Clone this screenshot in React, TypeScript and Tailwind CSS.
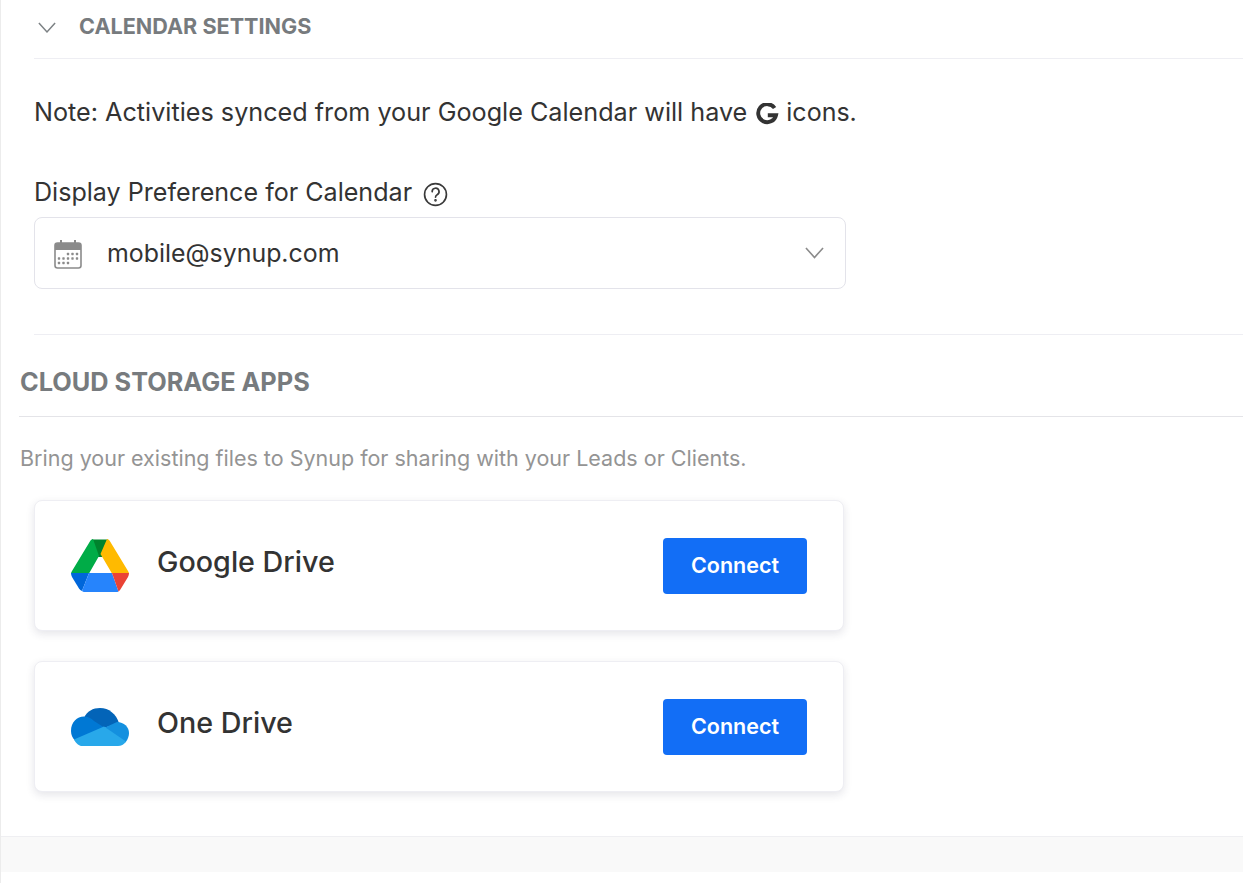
import React from 'react';

const GoogleDriveIcon = () => (
  <svg width="58" height="53" viewBox="0 0 58 53" className="shrink-0">
    <path d="M21 0.5 L37 0.5 L31 18 L27 18 L21 0.5 Z" fill="#00832d" />
    <path d="M19.5 1.5 Q20.5 0 22 0 L28 17 L18 34.5 L0 34.5 Q0 33.5 1 32 L19.5 1.5 Z" fill="#00ac47" />
    <path d="M36 0 Q37.5 0 38.5 1.5 L57 32 Q58 33.5 58 34.5 L41 34.5 L29.5 15 L36 0 Z" fill="#ffba00" />
    <path d="M0 34 L18 34 L11 52 Q9 51 8 49.5 L1 38 Q0 36 0 34 Z" fill="#0066da" />
    <path d="M18 34 L41 34 L47.5 52.5 Q46.5 53 45 53 L13 53 Q12 53 11 52 L18 34 Z" fill="#2684fc" />
    <path d="M41 34 L58 34 Q58 36 57 38 L50 49.5 Q49 51.5 47.5 52.5 L41 34 Z" fill="#ea4335" />
  </svg>
);

const OneDriveIcon = () => (
  <svg width="58" height="38" viewBox="0 0 58 38" className="shrink-0">
    <path d="M13 10 C16 3 22 0 29 0 C38 0 45 6 48 15 L33 20 L20 14 Z" fill="#0364b8" />
    <path d="M13 8.5 C6 8.5 0 14 0 23 C0 27 1.5 30 4 32.5 L34 20 L23 13 C20 10 17 8.5 13 8.5 Z" fill="#0078d4" />
    <path d="M46 14 C53 14 58 19 58 25 C58 28 57 31 54.5 34.5 L33 20 Z" fill="#1490df" />
    <path d="M3 31.5 L33 18.5 L55 33.5 C53 36.5 50 38 47 38 L11 38 C8 38 5 35.5 3 31.5 Z" fill="#28a8ea" />
  </svg>
);

const GoogleMark = () => (
  <svg width="23" height="23" viewBox="0 0 23 23" fill="none" className="shrink-0">
    <path d="M18.6 5 A9 9 0 1 0 20 12.2 L11.8 12.2" stroke="#333333" strokeWidth="3.9" />
  </svg>
);

const CalendarIcon = () => (
  <svg width="30" height="30" viewBox="0 0 30 30" className="shrink-0">
    <rect x="2" y="4" width="26" height="25" rx="2.5" fill="#fff" stroke="#8b8b8b" strokeWidth="1.6" />
    <path d="M2 7 Q2 4 5 4 L25 4 Q28 4 28 7 L28 11 L2 11 Z" fill="#8b8b8b" />
    <rect x="7" y="1" width="2" height="5" fill="#8b8b8b" />
    <rect x="21" y="1" width="2" height="5" fill="#8b8b8b" />
    <g fill="#8b8b8b">
      {[[15, 15], [19.5, 15], [24, 15], [6, 19.5], [10.5, 19.5], [15, 19.5], [19.5, 19.5], [24, 19.5], [6, 24], [10.5, 24], [15, 24]].map(([x, y]) => (
        <rect key={`${x}-${y}`} x={x - 1.2} y={y - 1.2} width="2.4" height="2.4" rx="0.6" />
      ))}
    </g>
  </svg>
);

const HelpIcon = () => (
  <svg width="25" height="25" viewBox="0 0 24 24" fill="none" stroke="#3a3a3a" strokeWidth="1.6" strokeLinecap="round" className="shrink-0">
    <circle cx="12" cy="12" r="10.5" />
    <path d="M8.8 9.3 A3.3 3.3 0 1 1 13.6 12.2 C12.6 12.8 12 13.3 12 14.6" />
    <circle cx="12" cy="17.6" r="0.5" fill="#3a3a3a" />
  </svg>
);

const Chevron = ({ color, width }: { color: string; width: number }) => (
  <svg width={width} height={width * 0.6} viewBox="0 0 20 12" fill="none" stroke={color} strokeWidth="1.7" className="shrink-0">
    <path d="M1 1 L10 11 L19 1" />
  </svg>
);

const AppCard = ({ name, icon }: { name: string; icon: React.ReactNode }) => (
  <div className="h-[131px] w-[810px] rounded-[8px] border border-[#eeeef3] bg-white shadow-[0_3px_8px_rgba(40,40,70,0.12)] pl-[36px] pr-[36px] flex items-center">
    <div className="w-[58px] flex justify-center">{icon}</div>
    <span className="ml-[28px] mb-[8px] text-[28.7px] font-medium text-[#333333]">{name}</span>
    <button className="ml-auto h-[56px] w-[144px] pb-[2px] rounded-[4px] bg-[#126ef6] text-white text-[21.5px] font-semibold mt-[1px]">Connect</button>
  </div>
);

export default function App() {
  return (
    <div className="w-[1243px] h-[883px] overflow-hidden bg-white border-l border-[#ececec] font-['Inter',sans-serif] flex flex-col">
      <div className="pl-[33px]">
        <div className="h-[59px] border-b border-[#eeeef3] flex items-start pt-[10px]">
          <span className="ml-[4px] mt-[12px]"><Chevron color="#7d8285" width={18} /></span>
          <span className="ml-[23px] text-[21.6px] leading-[32px] font-bold text-[#777b7e]">CALENDAR SETTINGS</span>
        </div>
        <div className="mt-[36px] flex items-center h-[36px] text-[25.2px] text-[#333333]">
          Note: Activities synced from your Google Calendar will have
          <span className="ml-[9px] mr-[7px] mt-[3px]"><GoogleMark /></span>
          <span className="text-[25px]">icons.</span>
        </div>
        <div className="mt-[44px] flex items-center h-[36px] text-[25.1px] text-[#333333]">
          Display Preference for Calendar
          <span className="ml-[11px] mt-[2px]"><HelpIcon /></span>
        </div>
        <div className="mt-[6px] w-[812px] h-[72px] rounded-[8px] border border-[#e3e3ea] flex items-center pl-[18px] pr-[21px]">
          <span className="mt-[2px]"><CalendarIcon /></span>
          <span className="ml-[24px] mt-[2px] text-[24.9px] text-[#333333]">mobile@synup.com</span>
          <span className="ml-auto"><Chevron color="#8b8b8b" width={19} /></span>
        </div>
        <div className="mt-[45px] border-b border-[#eeeef3]" />
      </div>
      <div className="pl-[18px]">
        <div className="h-[82px] border-b border-[#e4e4e8] flex items-start pt-[30px]">
          <span className="ml-[1px] text-[25.3px] leading-[34px] font-bold text-[#777b7e]">CLOUD STORAGE APPS</span>
        </div>
        <p className="ml-[1px] mt-[25px] text-[21.5px] leading-[32px] text-[#949494]">Bring your existing files to Synup for sharing with your Leads or Clients.</p>
        <div className="ml-[15px] mt-[26px] flex flex-col gap-[30px]">
          <AppCard name="Google Drive" icon={<GoogleDriveIcon />} />
          <AppCard name="One Drive" icon={<OneDriveIcon />} />
        </div>
      </div>
      <div className="mt-[44px] h-[36px] bg-[#f9f9f9] border-t border-[#efeff2]" />
    </div>
  );
}
